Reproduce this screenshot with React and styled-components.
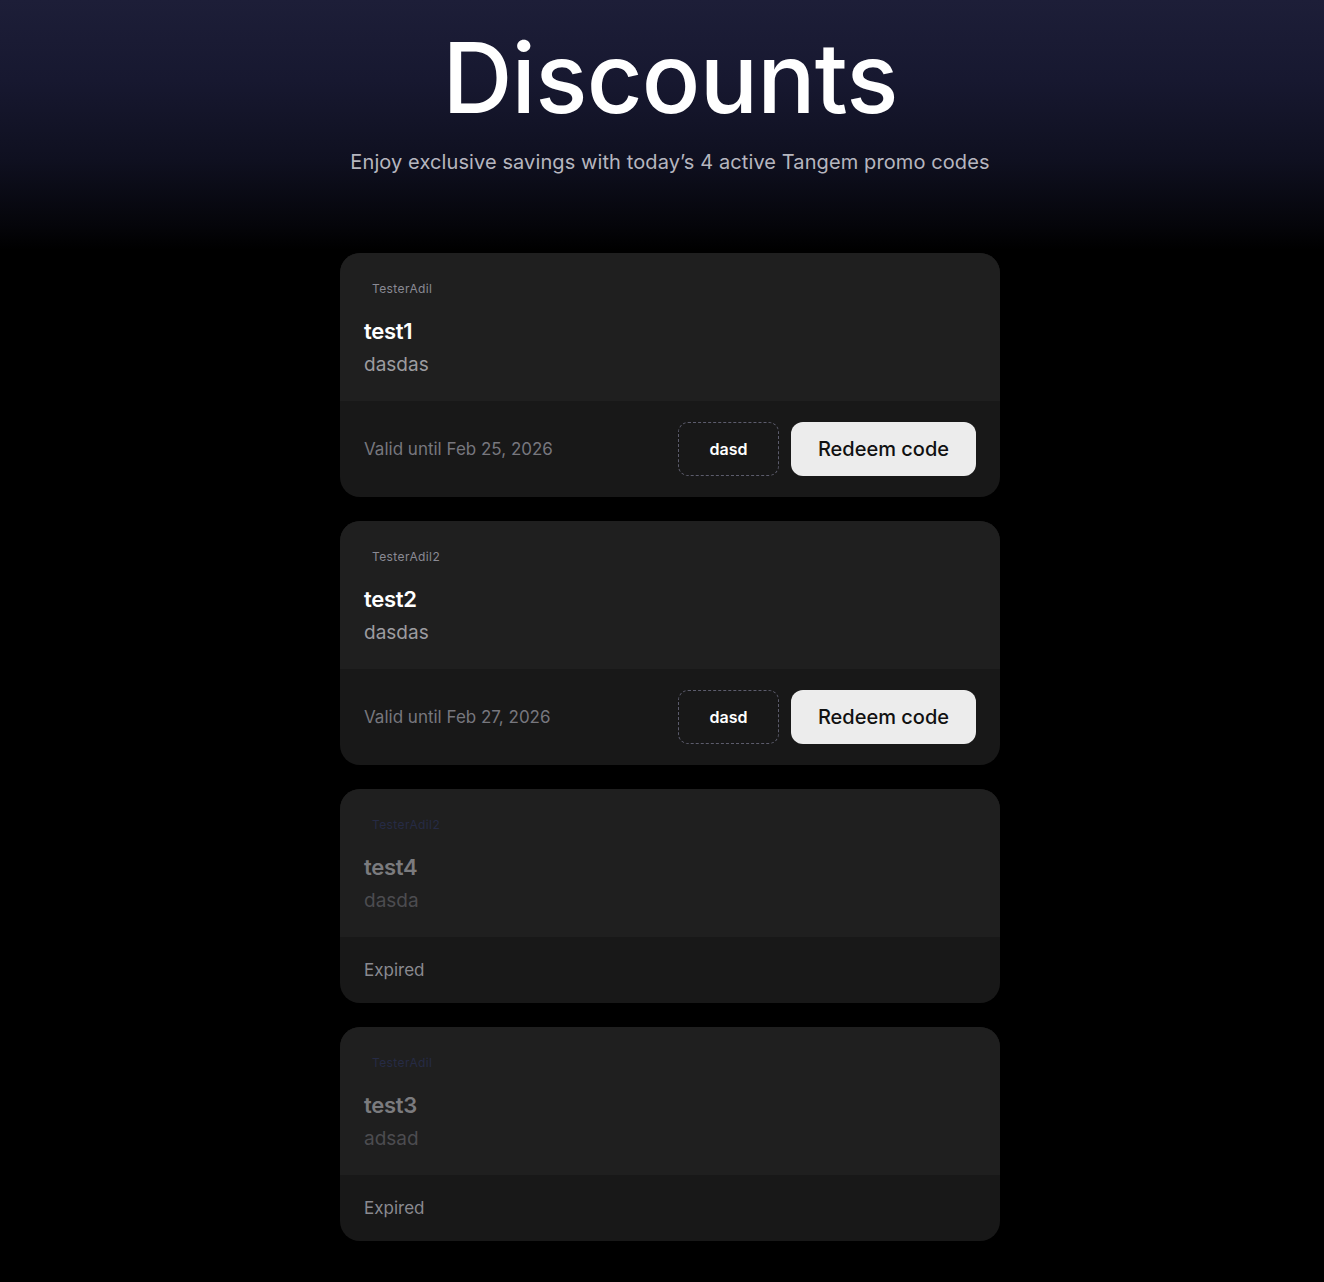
import React from "react";
import styled, { createGlobalStyle, css } from "styled-components";

const GlobalStyle = createGlobalStyle`
  html, body {
    margin: 0;
    padding: 0;
    background: #000;
  }
  body {
    font-family: Inter, "Noto Sans", sans-serif;
    -webkit-font-smoothing: antialiased;
  }
`;

const Page = styled.div`
  min-height: 1282px;
  background:
    linear-gradient(180deg, #1d1e38 0px, #171830 80px, #0f1020 160px, #05050a 225px, #000 250px);
  padding: 0 0 40px 16px;
  box-sizing: border-box;
`;

const Header = styled.header`
  display: flex;
  flex-direction: column;
  align-items: center;
  padding-top: 26px;
  height: 253px;
  box-sizing: border-box;
`;

const Title = styled.h1`
  margin: 0;
  font-size: 97px;
  line-height: 104px;
  font-weight: 500;
  letter-spacing: -0.8px;
  color: #fff;
`;

const Subtitle = styled.p`
  margin: 18px 0 0;
  font-size: 20px;
  line-height: 28px;
  color: #b6b6bf;
  letter-spacing: 0.1px;
`;

const List = styled.div`
  display: flex;
  flex-direction: column;
  gap: 24px;
  width: 660px;
  margin: 0 auto;
`;

const Card = styled.article`
  border-radius: 20px;
  overflow: hidden;
  background: #181818;
`;

const Top = styled.div`
  background: #1f1f1f;
  padding: 28px 24px 24px;
  display: flex;
  flex-direction: column;
`;

const Brand = styled.span`
  font-size: 12px;
  line-height: 16px;
  padding-left: 8px;
  letter-spacing: 0.4px;
  color: ${(p) => (p.$expired ? "#262b45" : "#8a8a94")};
`;

const Name = styled.h2`
  margin: 20px 0 0;
  font-size: 22px;
  line-height: 28px;
  font-weight: 600;
  letter-spacing: -0.3px;
  color: ${(p) => (p.$expired ? "#7b7b7e" : "#fff")};
`;

const Desc = styled.p`
  margin: 8px 0 0;
  font-size: 19px;
  line-height: 24px;
  color: ${(p) => (p.$expired ? "#4c4c50" : "#9c9ca0")};
`;

const Bottom = styled.div`
  display: flex;
  align-items: center;
  justify-content: space-between;
  padding: ${(p) => (p.$expired ? "21px 24px" : "21px 24px")};
`;

const Status = styled.span`
  font-size: 17px;
  line-height: 24px;
  color: ${(p) => (p.$expired ? "#8a8a90" : "#77777e")};
`;

const Actions = styled.div`
  display: flex;
  gap: 12px;
`;

const buttonBase = css`
  height: 54px;
  box-sizing: border-box;
  display: inline-flex;
  align-items: center;
  justify-content: center;
  font-family: inherit;
  cursor: pointer;
`;

const CodeBox = styled.button`
  ${buttonBase};
  width: 101px;
  border: 1px dashed #5c5c6c;
  border-radius: 10px;
  background: transparent;
  color: #fff;
  font-size: 16px;
  font-weight: 600;
`;

const Redeem = styled.button`
  ${buttonBase};
  width: 185px;
  border: none;
  border-radius: 12px;
  background: #ececec;
  color: #111;
  font-size: 20px;
  font-weight: 500;
`;

const promos = [
  { brand: "TesterAdil", name: "test1", desc: "dasdas", until: "Feb 25, 2026", code: "dasd" },
  { brand: "TesterAdil2", name: "test2", desc: "dasdas", until: "Feb 27, 2026", code: "dasd" },
  { brand: "TesterAdil2", name: "test4", desc: "dasda", expired: true },
  { brand: "TesterAdil", name: "test3", desc: "adsad", expired: true },
];

const PromoCard = ({ promo }) => (
  <Card>
    <Top>
      <Brand $expired={promo.expired}>{promo.brand}</Brand>
      <Name $expired={promo.expired}>{promo.name}</Name>
      <Desc $expired={promo.expired}>{promo.desc}</Desc>
    </Top>
    <Bottom $expired={promo.expired}>
      {promo.expired ? (
        <Status $expired>Expired</Status>
      ) : (
        <>
          <Status>Valid until {promo.until}</Status>
          <Actions>
            <CodeBox>{promo.code}</CodeBox>
            <Redeem>Redeem code</Redeem>
          </Actions>
        </>
      )}
    </Bottom>
  </Card>
);

export default function App() {
  return (
    <>
      <GlobalStyle />
      <Page>
        <Header>
          <Title>Discounts</Title>
          <Subtitle>Enjoy exclusive savings with today’s 4 active Tangem promo codes</Subtitle>
        </Header>
        <List>
          {promos.map((p) => (
            <PromoCard key={p.name} promo={p} />
          ))}
        </List>
      </Page>
    </>
  );
}
